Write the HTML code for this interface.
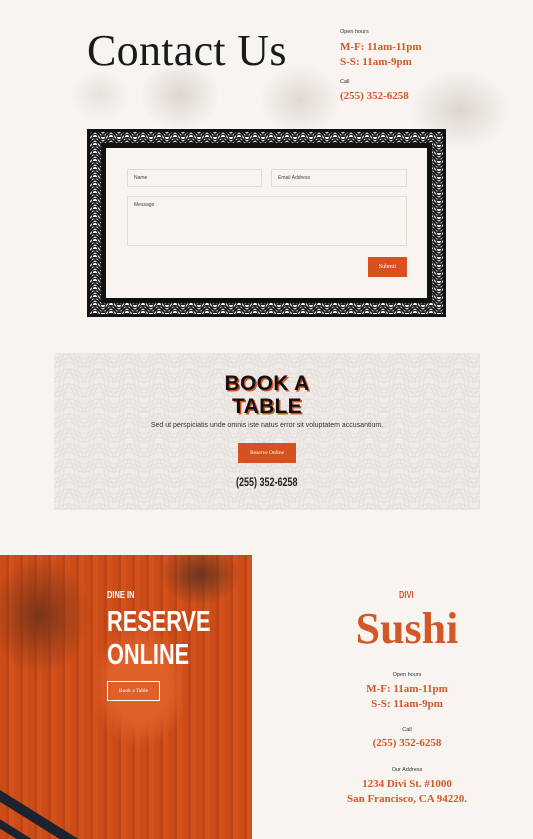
<!DOCTYPE html>
<html style="width:533px;height:839px;overflow:hidden"><head><meta charset="utf-8"><style>
*{margin:0;padding:0;box-sizing:border-box}
body{width:533px;height:839px;background:#f8f4f0;position:relative;overflow:hidden;font-family:"Liberation Serif",serif}
.a{position:absolute}
.or{color:#d2582a}
.sm{font-family:"Liberation Sans",sans-serif;font-size:5.5px;color:#333}
.field{position:absolute;border:1px solid #e2dcd6;background:#f8f4f0;font-family:"Liberation Sans",sans-serif;font-size:5px;color:#444;padding:5px 6px}
.cond{font-family:"Liberation Sans",sans-serif;font-weight:bold;transform:scaleX(0.75);transform-origin:0 0;white-space:nowrap}
</style></head><body>
<div class="a" style="left:60px;top:55px;width:473px;height:110px;background:radial-gradient(ellipse 40px 35px at 120px 40px,#ddd6cf,transparent),radial-gradient(ellipse 40px 35px at 240px 45px,#e0d9d2,transparent),radial-gradient(ellipse 50px 40px at 400px 55px,#ddd6cf,transparent),radial-gradient(ellipse 30px 25px at 40px 40px,#e8e2dc,transparent)"></div>
<div class="a" style="left:87px;top:25px;font-size:44px;color:#1a1a1a;letter-spacing:0.3px">Contact Us</div>
<div class="a sm" style="left:340px;top:29px">Open hours</div>
<div class="a or" style="left:340px;top:40px;font-size:11px;line-height:15px;font-weight:bold">M-F: 11am-11pm<br>S-S: 11am-9pm</div>
<div class="a sm" style="left:340px;top:79px">Call</div>
<div class="a or" style="left:340px;top:90px;font-size:11px;font-weight:bold">(255) 352-6258</div>

<svg class="a" style="left:87px;top:129px" width="359" height="188">
<defs><pattern id="sg" width="16" height="8" patternUnits="userSpaceOnUse">
<rect width="16" height="8" fill="#fff"/>
<g fill="none" stroke="#111" stroke-width="1.2">
<circle cx="8" cy="8" r="7.4"/><circle cx="8" cy="8" r="5"/><circle cx="8" cy="8" r="2.6"/>
<circle cx="0" cy="0" r="7.4"/><circle cx="0" cy="0" r="5"/><circle cx="0" cy="0" r="2.6"/>
<circle cx="16" cy="0" r="7.4"/><circle cx="16" cy="0" r="5"/><circle cx="16" cy="0" r="2.6"/>
</g></pattern></defs>
<rect x="0" y="0" width="359" height="188" fill="#111"/>
<rect x="3" y="3" width="353" height="182" fill="url(#sg)"/>
<rect x="14" y="14" width="331" height="160" fill="#111"/>
<rect x="19" y="19" width="321" height="150" fill="#f8f4f0"/>
</svg>
<div class="field" style="left:127px;top:169px;width:135px;height:18px">Name</div>
<div class="field" style="left:271px;top:169px;width:136px;height:18px">Email Address</div>
<div class="field" style="left:127px;top:196px;width:280px;height:50px">Message</div>
<div class="a" style="left:368px;top:257px;width:39px;height:20px;background:#d6511f;color:#fff;font-size:6px;text-align:center;line-height:20px">Submit</div>

<svg class="a" style="left:54px;top:353px" width="426" height="157">
<defs><pattern id="sg2" width="30" height="15" patternUnits="userSpaceOnUse">
<rect width="30" height="15" fill="#efebe7"/>
<g fill="none" stroke="#e2ddd8" stroke-width="0.8">
<circle cx="15" cy="15" r="14"/><circle cx="15" cy="15" r="10"/><circle cx="15" cy="15" r="6"/>
<circle cx="0" cy="0" r="14"/><circle cx="0" cy="0" r="10"/><circle cx="0" cy="0" r="6"/>
<circle cx="30" cy="0" r="14"/><circle cx="30" cy="0" r="10"/><circle cx="30" cy="0" r="6"/>
</g></pattern></defs>
<rect width="426" height="157" fill="url(#sg2)"/></svg>
<div class="a" style="left:54px;top:372px;width:426px;text-align:center;font-family:'Liberation Sans',sans-serif;font-weight:900;font-size:21px;line-height:23px;color:#111;text-shadow:1.5px 1.5px 0 #d6511f;letter-spacing:0.3px">BOOK A<br>TABLE</div>
<div class="a" style="left:54px;top:422px;width:426px;text-align:center;font-family:'Liberation Sans',sans-serif;font-size:7px;color:#333">Sed ut perspiciatis unde omnis iste natus error sit voluptatem accusantium.</div>
<div class="a" style="left:238px;top:443px;width:58px;height:20px;background:#d6511f;color:#fff;font-size:5.5px;text-align:center;line-height:20px">Reserve Online</div>
<div class="a cond" style="left:236px;top:475px;font-size:12px;color:#222">(255) 352-6258</div>

<div class="a" style="left:0;top:555px;width:252px;height:284px;overflow:hidden;background:
radial-gradient(ellipse 40px 30px at 200px 20px,#6b3520,transparent),
radial-gradient(ellipse 70px 90px at 140px 130px,#e0602a 40%,transparent 70%),
radial-gradient(ellipse 50px 60px at 40px 60px,#7a3418,transparent),
repeating-linear-gradient(90deg,#cc4c18 0 6px,#c04515 6px 9px,#d2521c 9px 14px),#c94a17">
<div class="a" style="left:0;top:235px;width:140px;height:10px;background:#1d2230;transform:rotate(32deg);transform-origin:0 0"></div>
<div class="a" style="left:-10px;top:258px;width:140px;height:8px;background:#1d2230;transform:rotate(32deg);transform-origin:0 0"></div>
</div>
<div class="a cond" style="left:107px;top:590px;font-size:10px;color:#fff">DINE IN</div>
<div class="a cond" style="left:107px;top:606px;font-size:29px;line-height:33px;color:#fff">RESERVE<br>ONLINE</div>
<div class="a" style="left:107px;top:681px;width:53px;height:20px;border:1px solid #fff;color:#fff;font-size:5.5px;text-align:center;line-height:18px">Book a Table</div>

<div class="a or" style="left:399px;top:590px;font-family:'Liberation Sans',sans-serif;font-weight:bold;font-size:10px;transform:scaleX(0.75);transform-origin:0 0">DIVI</div>
<div class="a or" style="left:252px;top:603px;width:310px;text-align:center;font-size:44px;font-weight:bold">Sushi</div>
<div class="a sm" style="left:252px;top:672px;width:310px;text-align:center">Open hours</div>
<div class="a or" style="left:252px;top:682px;width:310px;text-align:center;font-size:11px;line-height:15px;font-weight:bold">M-F: 11am-11pm<br>S-S: 11am-9pm</div>
<div class="a sm" style="left:252px;top:727px;width:310px;text-align:center">Call</div>
<div class="a or" style="left:252px;top:737px;width:310px;text-align:center;font-size:11px;font-weight:bold">(255) 352-6258</div>
<div class="a sm" style="left:252px;top:767px;width:310px;text-align:center">Our Address</div>
<div class="a or" style="left:252px;top:777px;width:310px;text-align:center;font-size:11px;line-height:15px;font-weight:bold">1234 Divi St. #1000<br>San Francisco, CA 94220.</div>
</body></html>
